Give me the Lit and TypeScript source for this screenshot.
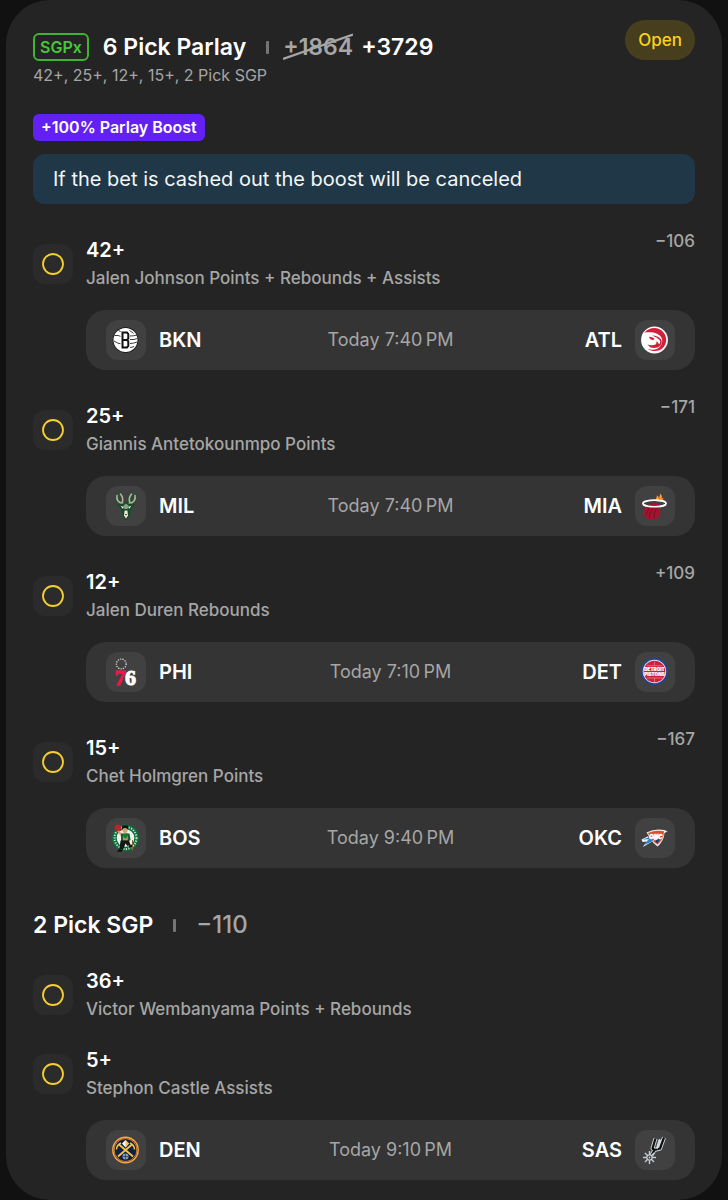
import { LitElement, html, svg, css, TemplateResult } from "lit";
import { customElement, property } from "lit/decorators.js";

const SHAMROCK = svg`<circle cx="12.5" cy="9.5" r="2.4"/><circle cx="16" cy="9" r="2.4"/><circle cx="14" cy="12" r="2.4"/>`;

const rotated = (count: number, draw: (angle: number) => unknown) =>
  Array.from({ length: count }, (_, i) => draw((360 / count) * i));

const LOGOS: Record<string, TemplateResult> = {
  BKN: svg`
    <circle cx="19.5" cy="20" r="12.8" fill="#151515"/>
    <circle cx="19.5" cy="20" r="12" fill="#fff"/>
    <g fill="none" stroke="#222" stroke-width=".9">
      <path d="M8.500 15.500q4-.5 6.500 1M8 21q3.500 2.500 7.500 3M12.500 10.500q2 .8 3 2M24 19.500q4 .5 7.500-1M24 16q3.500 0 7-1M24 23.500q3.500 0 7-1.500M23.500 27.500q2.500 0 4.500-1M23.500 10.500q2.500 1.500 4 3"/>
    </g>
    <rect x="14.500" y="11" width="9.500" height="18" rx="1.500" fill="#fff"/>
    <path d="M16.500 12.500h4.500l1.300 1.500v4.500l-1.300 1.400 1.300 1.400v4.700l-1.300 1.500h-4.500zM17 19.900h4" fill="none" stroke="#111" stroke-width="2"/>`,
  ATL: svg`
    <circle cx="19.500" cy="20" r="13.400" fill="#fff"/>
    <path d="M9.500 12.500C13 8.500 19 7 24 9c7 3 9.500 11.500 5 17.500-3.500 5-11 6-16 2.500 5 1.500 10.500.5 13-3.500 2.800-4.500.8-9.500-3.500-11.500-4-2-8.500-1.800-13-1.500z" fill="#d3203a"/>
    <path d="M14 16.800q3 .2 5.500 1.800l-1 1.500q-3.500.3-4.500-3.300z" fill="#d3203a"/>
    <path d="M12.500 24.500q5 1.500 8.500-.3l.8-3.200 2.300 3.300q2-1.800.4-4.300-2.500-3-7.500-4.500 7 .3 9.200 4.200 1.500 3.500-.8 6-3.500 3.300-10 1.800z" fill="#d3203a"/>`,
  MIL: svg`
    <g fill="none" stroke-linecap="round" stroke-linejoin="round">
      <path d="M17.500 17.500c-5-.5-7.500-3.500-6.500-8M16 16.500c1.500-3 .5-6-1.500-8.500M22.500 17.500c5-.5 7.500-3.500 6.500-8M24 16.500c-1.500-3-.5-6 1.500-8.500" stroke="#1c5230" stroke-width="3"/>
      <path d="M17.500 17.500c-5-.5-7.500-3.500-6.500-8M16 16.500c1.500-3 .5-6-1.500-8.500M22.500 17.500c5-.5 7.500-3.500 6.500-8M24 16.500c-1.500-3-.5-6 1.500-8.500" stroke="#b9b19b" stroke-width="1.600"/>
    </g>
    <path d="M11 18.500l6-1 3-1.500 3 1.500 6 1-3.500 3.500-1 4-2 6-2.500 2-2.500-2-2-6-1-4z" fill="#164b2a"/>
    <path d="M17 20l3-2.500 3 2.500-1.500 3h-3z" fill="#8f9d83"/>
    <path d="M14.500 19.800l3 1.200-.5 2zM25.500 19.800l-3 1.200.5 2z" fill="#fff"/>
    <path d="M18.600 24.500h2.800l.6 5-2 3-2-3z" fill="#eee8d7"/>
    <path d="M19 28h2l-1 1.500z" fill="#111"/>`,
  MIA: svg`
    <path d="M20.500 15c0-3 2-3.500 1-5.500 2 .5 2.200 1.500 2 2.500 1.200-1.200 1.800-2.500 1.300-4.500 2.200 1.500 2.700 3.500 1.700 5l2-.8c-.5 3-2.500 3.500-4.500 4.300z" fill="#f5a32c"/>
    <path d="M22.500 15.500c.5-2 2-2 2.500-4 .8 2 0 3-1 4z" fill="#b01638"/>
    <ellipse cx="19.500" cy="17.500" rx="11.600" ry="3.300" fill="none" stroke="#fff" stroke-width="1.700"/>
    <path d="M14.500 18.500c2.500-2 7-2.500 10-1l.8 7.500c.5 5-3 9-8 9.200-5 0-8.800-3.200-8.800-7.700 0-3.500 2.500-6.500 6-8z" fill="#a3152f"/>
    <path d="M11 29.500c1-4.500 3-7.500 6.500-10M14.500 32.500c-.2-5 1.500-8.500 5.500-12M19.500 32.500c-1-4 0-7.500 3-11" fill="none" stroke="#5a0f20" stroke-width=".8"/>
    <path d="M8.300 18.800c5 2.600 17 2.600 22.500 0" fill="none" stroke="#fff" stroke-width="1.700"/>`,
  PHI: svg`
    <circle cx="15.300" cy="12" r="4.900" fill="none" stroke="#ddd" stroke-width="1.300" stroke-dasharray="1.200 1.170"/>
    <g font-family="Liberation Serif, serif" font-weight="700" font-size="22" stroke-width="1">
      <text x="8.500" y="32.500" fill="#ed174c" stroke="#ed174c">7</text>
      <text x="19" y="32.500" fill="#fff" stroke="#fff">6</text>
    </g>`,
  DET: svg`
    <circle cx="19.500" cy="19.500" r="13.500" fill="#1d4796"/>
    <circle cx="19.500" cy="19.500" r="11.700" fill="#e9e6e8"/>
    <circle cx="19.500" cy="19.500" r="10.800" fill="#ce2038"/>
    <path d="M12 13.800h15M12 26h15M19.500 9.500v4M19.500 26v4" fill="none" stroke="#e58e97" stroke-width=".7"/>
    <g font-family="Inter, sans-serif" font-weight="900" fill="#fff" text-anchor="middle" stroke="#fff" stroke-width=".2">
      <text x="19.500" y="19.200" font-size="4.600">DETROIT</text>
      <text x="19.500" y="24.200" font-size="4.600">PISTONS</text>
    </g>`,
  BOS: svg`
    <circle cx="19.500" cy="20" r="13.400" fill="#08713c"/>
    <circle cx="19.500" cy="20" r="11" fill="none" stroke="#c4dccb" stroke-width="2" stroke-dasharray="1.300 1.300"/>
    <circle cx="19.500" cy="20" r="8.800" fill="#f0f1ed"/>
    <circle cx="12" cy="10" r="3.400" fill="#b3282b"/>
    <path d="M11.500 13.500l1.500-1 3.500 4-1.500 2z" fill="#d4a377"/>
    <path d="M16.500 7.500h5.500l.5 3.200h-7z" fill="#111"/>
    <circle cx="19" cy="12.500" r="2.500" fill="#d4a377"/>
    <path d="M15 15.500h8.500l1 6-2.500 3h-7z" fill="#1c5c34"/>
    <path d="M17 15h4.500l.5 7.500h-5z" fill="#b6954c"/>
    <path d="M14.500 22.500h8.500l1.500 4.500-3 1-2-2.500-2.500 6.500-3.500-1z" fill="#171717"/>
    <path d="M13 31l3.500 1-.5 1.700h-5zM23.500 26.500l3.500 1v2h-4z" fill="#111"/>
    <path d="M26.500 22v10.500" stroke="#8c6239" stroke-width="1"/>
    <g fill="#0c7b40" transform="translate(10.200 11) scale(.65)">${SHAMROCK}</g>`,
  OKC: svg`
    <path d="M11.500 14.500q8.500-4.500 18-2.500l3 1.500-3 1.500q-.5 8-7 13.500l-4-3.500z" fill="#e8eef3"/>
    <path d="M13 15q8-3.500 16-1.700 0 8-6.500 13.200-5.500-3.500-8-8.500z" fill="#e54a2c"/>
    <path d="M6.500 21.500l7-3.500-.5 1.800 14-3.500-6 6.700-1-1.200-12 7.200 3.500-5.500-4 .5z" fill="#edf3f8"/>
    <path d="M8 27.500l6-6.500-1 .2-5.500.3 7.500-2.500-.5 1.700 6-.5-4.500 3.800z" fill="#2a83c3"/>
    <path d="M20 23l7-5-4.500 7.500z" fill="#183f73"/>
    <g font-family="Inter, sans-serif" font-size="6" font-weight="900" font-style="italic" fill="#fff" stroke="#fff" stroke-width=".3">
      <text x="14" y="20.500">OKC</text>
    </g>`,
  DEN: svg`
    <circle cx="19.500" cy="20" r="13.400" fill="#f5ad3c"/>
    <circle cx="19.500" cy="20" r="12" fill="#7e2437"/>
    <circle cx="19.500" cy="20" r="11.200" fill="none" stroke="#f5b942" stroke-width=".8"/>
    <circle cx="19.500" cy="20" r="10.800" fill="#0e2240"/>
    <path d="M12 26.500L26 14.500M27 26.500L13 14.500" stroke="#f7c34c" stroke-width="1.800"/>
    <path d="M10.500 19.500q.2-4.500 4.500-6.500M28.500 19.500q-.2-4.500-4.500-6.500" fill="none" stroke="#f7c34c" stroke-width="1.400"/>
    <path d="M19.500 10l3.500 3.500-3.500 4-3.500-4z" fill="#fff"/>
    <path d="M19.500 10l3.500 3.500-3.500 4z" fill="#f7c34c"/>
    <circle cx="19.500" cy="26.500" r="3" fill="#8aa3b8"/>
    <path d="M19.500 23.500v6M16.500 26.500h6" stroke="#0e2240" stroke-width=".6"/>`,
  SAS: svg`
    <g fill="none" stroke-linejoin="round">
      <path d="M16 26l3.500-6-2-1.500 3-10M19.500 20l5.500-1.500 4-11M23 18l2.500-8" stroke="#d4dade" stroke-width="4"/>
      <path d="M16 26l3.500-6-2-1.500 3-10M19.500 20l5.500-1.500 4-11" stroke="#111" stroke-width="2.200"/>
      <path d="M22 19l3-10" stroke="#d4dade" stroke-width="1.200"/>
    </g>
    <g stroke="#c4ced4" stroke-width="1.400">
      ${rotated(8, (a) => svg`<path d="M14.500 24.500v-3.500" transform=${`rotate(${a} 14.500 27.500)`}/>`)}
    </g>
    <circle cx="14.500" cy="27.500" r="3.300" fill="#c4ced4"/>
    <circle cx="14.500" cy="27.500" r="2" fill="#333"/>
    <circle cx="14.500" cy="27.500" r="1" fill="#c4ced4"/>`,
};

interface Game {
  away: string;
  home: string;
  time: string;
}

interface Leg {
  line: string;
  market: string;
  odds?: string;
  game?: Game;
}

const PICKS: Leg[] = [
  { line: "42+", market: "Jalen Johnson Points + Rebounds + Assists", odds: "−106", game: { away: "BKN", home: "ATL", time: "Today 7:40\u202fPM" } },
  { line: "25+", market: "Giannis Antetokounmpo Points", odds: "−171", game: { away: "MIL", home: "MIA", time: "Today 7:40\u202fPM" } },
  { line: "12+", market: "Jalen Duren Rebounds", odds: "+109", game: { away: "PHI", home: "DET", time: "Today 7:10\u202fPM" } },
  { line: "15+", market: "Chet Holmgren Points", odds: "−167", game: { away: "BOS", home: "OKC", time: "Today 9:40\u202fPM" } },
];

const SGP_PICKS: Leg[] = [
  { line: "36+", market: "Victor Wembanyama Points + Rebounds" },
  { line: "5+", market: "Stephon Castle Assists", game: { away: "DEN", home: "SAS", time: "Today 9:10\u202fPM" } },
];

@customElement("team-logo")
export class TeamLogo extends LitElement {
  @property() team = "";

  static styles = css`
    :host {
      display: block;
      flex: none;
      width: 40px;
      height: 40px;
      border-radius: 12px;
      background: #414141;
    }
    .logo {
      display: block;
    }
  `;

  render() {
    return html`<svg class="logo" width="40" height="40" viewBox="0 0 40 40" aria-hidden="true">${LOGOS[this.team]}</svg>`;
  }
}

@customElement("game-bar")
export class GameBar extends LitElement {
  @property({ attribute: false }) game!: Game;

  static styles = css`
    :host {
      display: grid;
      grid-template-columns: 1fr auto 1fr;
      align-items: center;
      padding: 10px 20px;
      border-radius: 20px;
      background: #343434;
    }
    .team {
      display: flex;
      align-items: center;
      gap: 13px;
      color: #fff;
      font-size: 20px;
      font-weight: 600;
      line-height: 24px;
    }
    .home {
      justify-content: flex-end;
    }
    .time {
      color: #a6a6a6;
      font-size: 18px;
      line-height: 24px;
    }
  `;

  render() {
    const { away, home, time } = this.game;
    return html`
      <div class="team"><team-logo team=${away}></team-logo>${away}</div>
      <time class="time">${time}</time>
      <div class="team home">${home}<team-logo team=${home}></team-logo></div>
    `;
  }
}

@customElement("bet-leg")
export class BetLeg extends LitElement {
  @property({ attribute: false }) leg!: Leg;

  static styles = css`
    :host {
      display: grid;
      grid-template-columns: 40px 1fr auto;
      column-gap: 13px;
      row-gap: 22px;
    }
    .status {
      display: block;
      margin-top: 13px;
      border-radius: 12px;
      background: #2b2b2b;
    }
    .text {
      display: flex;
      flex-direction: column;
      gap: 6px;
      padding-top: 7px;
    }
    .line {
      margin: 0;
      color: #fff;
      font-size: 20px;
      font-weight: 600;
      line-height: 24px;
    }
    .market {
      margin: 0;
      color: #a6a6a6;
      font-size: 17px;
      font-weight: 500;
      line-height: 20px;
    }
    .odds {
      color: #a6a6a6;
      font-size: 17px;
      font-weight: 500;
      line-height: 20px;
    }
    .game {
      grid-column: 2 / -1;
    }
  `;

  render() {
    const { line, market, odds, game } = this.leg;
    return html`
      <svg class="status" width="40" height="40" viewBox="0 0 40 40" role="img" aria-label="Pending">
        <circle cx="20" cy="20" r="10" fill="none" stroke="#f5cf2e" stroke-width="1.800" />
      </svg>
      <div class="text">
        <h3 class="line">${line}</h3>
        <p class="market">${market}</p>
      </div>
      <span class="odds">${odds ?? ""}</span>
      ${game ? html`<game-bar class="game" .game=${game}></game-bar>` : ""}
    `;
  }
}

@customElement("app-root")
export class AppRoot extends LitElement {
  static styles = css`
    :host {
      display: block;
      box-sizing: border-box;
      min-height: 100vh;
      padding: 0 6px;
      background: #111;
      font-family: Inter, "Liberation Sans", sans-serif;
    }
    .card {
      padding: 20px 27px;
      border-radius: 44px;
      background: #242424;
    }
    .header {
      display: flex;
      justify-content: space-between;
      align-items: flex-start;
    }
    .summary {
      padding-top: 13px;
    }
    .heading {
      display: flex;
      align-items: center;
      gap: 14px;
    }
    .tag {
      padding: 2px 5px;
      border: 2px solid #3fb52f;
      border-radius: 6px;
      color: #46c836;
      font-size: 16px;
      font-weight: 600;
      line-height: 20px;
    }
    .title {
      margin: 0;
      color: #fff;
      font-size: 23px;
      font-weight: 600;
      line-height: 28px;
    }
    .divider {
      width: 3px;
      height: 13px;
      margin: 0 6px;
      border-radius: 1px;
      background: #757575;
    }
    .prices {
      display: flex;
      gap: 8px;
      margin-left: -6px;
      color: #fff;
      font-size: 23px;
      font-weight: 600;
      line-height: 28px;
    }
    .was {
      position: relative;
      color: #a6a6a6;
      text-decoration: none;
    }
    .slash {
      position: absolute;
      inset: 0;
      width: 100%;
      height: 100%;
    }
    .picks {
      margin: 4px 0 0;
      color: #a6a6a6;
      font-size: 16px;
      line-height: 20px;
    }
    .open {
      padding: 10px 13px;
      border-radius: 20px;
      background: #463e1c;
      color: #fbd021;
      font-size: 17px;
      font-weight: 500;
      line-height: 20px;
    }
    .boost {
      width: fit-content;
      margin-top: 29px;
      padding: 3px 8px;
      border-radius: 6px;
      background: #6320f3;
      color: #fff;
      font-size: 16px;
      font-weight: 600;
      line-height: 21px;
    }
    .notice {
      margin: 13px 0 0;
      padding: 13px 20px;
      border-radius: 12px;
      background: #1f3746;
      color: #f2f6f8;
      font-size: 20px;
      line-height: 24px;
    }
    .legs {
      display: flex;
      flex-direction: column;
      gap: 27px;
      margin-top: 27px;
    }
    .subheading {
      display: flex;
      align-items: center;
      gap: 14px;
      margin-top: 43px;
    }
    .sgp-odds {
      color: #a6a6a6;
      font-size: 24px;
      font-weight: 500;
      line-height: 28px;
    }
    .sgp-legs {
      gap: 22px;
      margin-top: 23px;
    }
  `;

  render() {
    return html`
      <main class="card">
        <header class="header">
          <div class="summary">
            <div class="heading">
              <span class="tag">SGPx</span>
              <h1 class="title">6 Pick Parlay</h1>
              <span class="divider"></span>
              <div class="prices">
                <s class="was">+1864<svg class="slash" viewBox="0 0 70 28" preserveAspectRatio="none" aria-hidden="true">
                  <path d="M0 26L70 1.500" stroke="#a6a6a6" stroke-width="2.200" />
                </svg></s>
                <span>+3729</span>
              </div>
            </div>
            <p class="picks">42+, 25+, 12+, 15+, 2 Pick SGP</p>
          </div>
          <span class="open">Open</span>
        </header>
        <div class="boost">+100% Parlay Boost</div>
        <p class="notice">If the bet is cashed out the boost will be canceled</p>
        <section class="legs">${PICKS.map((leg) => html`<bet-leg .leg=${leg}></bet-leg>`)}</section>
        <div class="subheading">
          <h2 class="title">2 Pick SGP</h2>
          <span class="divider"></span>
          <span class="sgp-odds">−110</span>
        </div>
        <section class="legs sgp-legs">${SGP_PICKS.map((leg) => html`<bet-leg .leg=${leg}></bet-leg>`)}</section>
      </main>
    `;
  }
}
